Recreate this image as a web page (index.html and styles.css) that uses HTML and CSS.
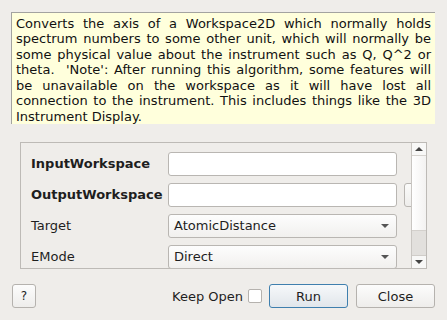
FILE: index.html
```html
<!DOCTYPE html>
<html>
<head>
<meta charset="utf-8">
<link rel="stylesheet" href="styles.css">
</head>
<body>
<div class="dialog">
  <div class="desc">Converts the axis of a Workspace2D which normally holds spectrum numbers to some other unit, which will normally be some physical value about the instrument such as Q, Q^2 or theta.&nbsp; 'Note': After running this algorithm, some features will be unavailable on the workspace as it will have lost all connection to the instrument. This includes things like the 3D Instrument Display.</div>
  <div class="group">
    <div class="scrollarea">
      <div class="rows">
        <div class="label bold">InputWorkspace</div>
        <div class="field"></div>
        <div></div>
        <div class="label bold">OutputWorkspace</div>
        <div class="field"></div>
        <div class="mini"></div>
        <div class="label">Target</div>
        <div class="combo"><span>AtomicDistance</span><i class="arrow"></i></div>
        <div></div>
        <div class="label">EMode</div>
        <div class="combo"><span>Direct</span><i class="arrow"></i></div>
        <div></div>
      </div>
    </div>
    <div class="scrollbar">
      <div class="sb-btn"><i class="up"></i></div>
      <div class="sb-handle"></div>
      <div class="sb-trough"></div>
      <div class="sb-btn down-btn"><i class="down"></i></div>
    </div>
  </div>
  <div class="footer">
    <button class="btn help">?</button>
    <div class="spacer"></div>
    <span class="keep">Keep Open</span>
    <span class="check"></span>
    <button class="btn run">Run</button>
    <button class="btn close">Close</button>
  </div>
</div>
</body>
</html>
```

FILE: styles.css
```css
html, body {
  margin: 0;
  padding: 0;
  background: #efedea;
  width: 447px;
  height: 320px;
  overflow: hidden;
  font-family: "DejaVu Sans", sans-serif;
  font-size: 13px;
  color: #1e1e1e;
}
.dialog {
  padding: 12px 12px 0 11px;
}
.desc {
  box-sizing: border-box;
  width: 424px;
  height: 112px;
  background: #ffffdc;
  border-left: 1px solid #a3a3a0;
  border-top: 1px solid #a3a3a0;
  padding: 3px 4px 0 4px;
  line-height: 15.45px;
  text-align: justify;
  color: #111;
  overflow: hidden;
}
.group {
  margin: 18px 0 0 9px;
  width: 405px;
  height: 125px;
  border: 1px solid #bdbab6;
  display: flex;
  overflow: hidden;
}
.scrollarea {
  flex: 1;
  min-width: 0;
  overflow: hidden;
  padding: 9px 0 0 10px;
}
.rows {
  display: grid;
  grid-template-columns: 130px 229px 30px;
  column-gap: 7px;
  row-gap: 7px;
  width: 420px;
}
.label {
  height: 24px;
  line-height: 23px;
  white-space: nowrap;
}
.bold { font-weight: bold; }
.field {
  height: 22px;
  background: #fff;
  border: 1px solid #b9b6b2;
  border-radius: 3px;
}
.mini {
  height: 22px;
  border: 1px solid #b9b6b2;
  border-radius: 3px;
  background: linear-gradient(#fbfbfa, #eeedeb);
}
.combo {
  height: 22px;
  border: 1px solid #b9b6b2;
  border-radius: 3px;
  background: linear-gradient(#fdfdfd, #f1f0ee);
  display: flex;
  align-items: center;
  padding: 0 7px 0 5px;
  line-height: 22px;
}
.combo span { flex: 1; }
.arrow {
  width: 0;
  height: 0;
  border-left: 4px solid transparent;
  border-right: 4px solid transparent;
  border-top: 4px solid #555;
}
.scrollbar {
  flex: none;
  width: 14px;
  border-left: 1px solid #c9c6c2;
  display: flex;
  flex-direction: column;
  background: #f6f5f4;
}
.sb-btn {
  height: 12px;
  display: flex;
  align-items: center;
  justify-content: center;
  border-bottom: 1px solid #d6d3cf;
  background: #f8f8f7;
}
.down-btn {
  border-bottom: none;
  border-top: 1px solid #d0cdc9;
}
.up {
  width: 0; height: 0;
  border-left: 4px solid transparent;
  border-right: 4px solid transparent;
  border-bottom: 4px solid #444;
}
.down {
  width: 0; height: 0;
  border-left: 4px solid transparent;
  border-right: 4px solid transparent;
  border-top: 4px solid #444;
}
.sb-handle {
  height: 74px;
  background: linear-gradient(90deg, #ffffff, #f3f2f1);
  border-bottom: 1px solid #d3d0cc;
}
.sb-trough {
  flex: 1;
  background: #e2e0dd;
}
.footer {
  display: flex;
  align-items: center;
  margin-top: 15px;
  height: 24px;
}
.btn {
  font-family: "DejaVu Sans", sans-serif;
  font-size: 13px;
  color: #1e1e1e;
  height: 24px;
  border: 1px solid #b5b2ae;
  border-radius: 3px;
  background: linear-gradient(#fcfcfc, #eeedeb);
  padding: 0;
}
.help {
  width: 24px;
  margin-left: 1px;
  font-size: 12px;
}
.spacer { flex: 1; }
.keep { margin-right: 5px; }
.check {
  width: 12px;
  height: 12px;
  background: #fff;
  border: 1px solid #b5b2ae;
  border-radius: 2px;
  margin-right: 7px;
}
.run {
  width: 79px;
  border-color: #3f7fae;
  background: linear-gradient(#f6f8fa, #e1e6eb);
  margin-right: 8px;
}
.close {
  width: 79px;
}
```
